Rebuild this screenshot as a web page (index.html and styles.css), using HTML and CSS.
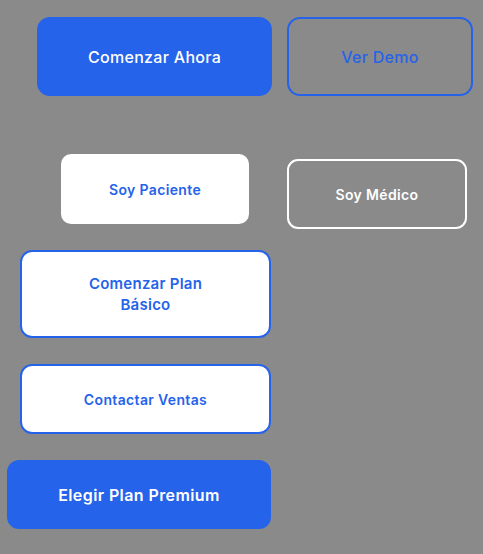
FILE: index.html
```html
<!DOCTYPE html>
<html lang="es">
<head>
<meta charset="utf-8">
<title>Botones</title>
<link rel="stylesheet" href="styles.css">
</head>
<body>
<main class="page">
  <div class="row row-hero">
    <button class="btn btn-primary btn-hero">Comenzar Ahora</button>
    <button class="btn btn-outline-blue btn-demo">Ver Demo</button>
  </div>
  <div class="row row-role">
    <button class="btn btn-white btn-patient">Soy Paciente</button>
    <button class="btn btn-outline-white btn-doctor">Soy Médico</button>
  </div>
  <div class="row row-plan row-first">
    <button class="btn btn-white-blue btn-basic"><span class="wrap">Comenzar Plan Básico</span></button>
  </div>
  <div class="row row-plan">
    <button class="btn btn-white-blue btn-sales">Contactar Ventas</button>
  </div>
  <div class="row row-premium">
    <button class="btn btn-primary btn-premium">Elegir Plan Premium</button>
  </div>
</main>
</body>
</html>
```
FILE: styles.css
```css
* { box-sizing: border-box; }
html, body {
  margin: 0;
  padding: 0;
  background: #8a8a8a;
}
body {
  font-family: Inter, "Noto Sans", "Liberation Sans", sans-serif;
  width: 483px;
  height: 554px;
  overflow: hidden;
}
.page {
  display: flex;
  flex-direction: column;
  padding-top: 17px;
}
.row {
  display: flex;
  align-items: flex-start;
}
.btn {
  display: flex;
  align-items: center;
  justify-content: center;
  font-family: inherit;
  border: 2px solid transparent;
  border-radius: 12px;
  padding: 0;
  margin: 0;
  text-align: center;
  cursor: pointer;
}
.btn-primary {
  background: #2563eb;
  border-color: #2563eb;
  color: #ffffff;
}
.btn-outline-blue {
  background: transparent;
  border-color: #2563eb;
  color: #2563eb;
}
.btn-white {
  background: #ffffff;
  border-color: #ffffff;
  color: #2563eb;
}
.btn-outline-white {
  background: transparent;
  border-color: #ffffff;
  color: #ffffff;
}
.btn-white-blue {
  background: #ffffff;
  border-color: #2563eb;
  color: #2563eb;
}

.row-hero {
  padding-left: 37px;
  gap: 15px;
}
.btn-hero, .btn-demo {
  height: 79px;
  font-size: 16px;
  font-weight: 500;
  letter-spacing: 0.3px;
  border-radius: 13px;
}
.btn-hero { width: 235px; }
.btn-demo { width: 186px; }

.row-role {
  margin-top: 58px;
  padding-left: 61px;
  height: 70px;
}
.btn-patient, .btn-doctor {
  height: 70px;
  font-size: 14px;
  font-weight: 600;
  letter-spacing: 0.35px;
}
.btn-patient { width: 188px; border-radius: 10px; }
.btn-doctor {
  width: 180px;
  margin-left: 38px;
  margin-top: 5px;
  border-radius: 11px;
}

.row-plan {
  margin-top: 26px;
  padding-left: 20px;
}
.btn-basic {
  width: 251px;
  height: 88px;
  font-size: 15px;
  font-weight: 600;
  line-height: 21px;
  letter-spacing: 0.25px;
}
.wrap {
  display: block;
  max-width: 130px;
}
.btn-sales {
  width: 251px;
  height: 70px;
  font-size: 14px;
  font-weight: 600;
  letter-spacing: 0.35px;
}

.row-premium {
  margin-top: 26px;
  padding-left: 7px;
}
.btn-premium {
  width: 264px;
  height: 69px;
  font-size: 16px;
  font-weight: 600;
  letter-spacing: 0.4px;
}
```
